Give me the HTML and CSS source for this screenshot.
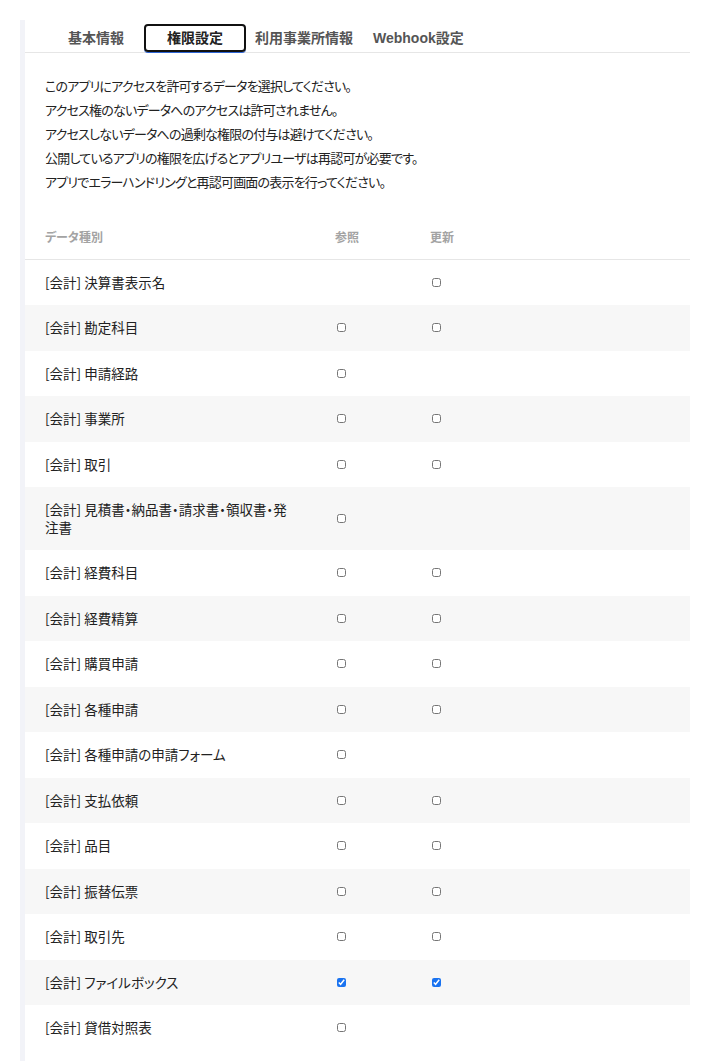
FILE: index.html
```html
<!DOCTYPE html>
<html lang="ja">
<head>
<meta charset="utf-8">
<title>権限設定</title>
<link rel="stylesheet" href="styles.css">
</head>
<body>
<div class="panel">
  <nav class="tabs">
    <span class="tab">基本情報</span>
    <span class="tab active">権限設定</span>
    <span class="tab">利用事業所情報</span>
    <span class="tab">Webhook設定</span>
  </nav>
  <div class="desc">
    <p>このアプリにアクセスを許可するデータを選択してください。</p>
    <p>アクセス権のないデータへのアクセスは許可されません。</p>
    <p>アクセスしないデータへの過剰な権限の付与は避けてください。</p>
    <p>公開しているアプリの権限を広げるとアプリユーザは再認可が必要です。</p>
    <p>アプリでエラーハンドリングと再認可画面の表示を行ってください。</p>
  </div>
  <table class="perm">
    <thead>
      <tr><th class="c-name">データ種別</th><th class="c-read">参照</th><th class="c-write">更新</th></tr>
    </thead>
    <tbody>
      <tr><td class="c-name">[会計] 決算書表示名</td><td class="c-read"></td><td class="c-write"><input type="checkbox"></td></tr>
      <tr><td class="c-name">[会計] 勘定科目</td><td class="c-read"><input type="checkbox"></td><td class="c-write"><input type="checkbox"></td></tr>
      <tr><td class="c-name">[会計] 申請経路</td><td class="c-read"><input type="checkbox"></td><td class="c-write"></td></tr>
      <tr><td class="c-name">[会計] 事業所</td><td class="c-read"><input type="checkbox"></td><td class="c-write"><input type="checkbox"></td></tr>
      <tr><td class="c-name">[会計] 取引</td><td class="c-read"><input type="checkbox"></td><td class="c-write"><input type="checkbox"></td></tr>
      <tr><td class="c-name">[会計] 見積書・納品書・請求書・領収書・発注書</td><td class="c-read"><input type="checkbox"></td><td class="c-write"></td></tr>
      <tr><td class="c-name">[会計] 経費科目</td><td class="c-read"><input type="checkbox"></td><td class="c-write"><input type="checkbox"></td></tr>
      <tr><td class="c-name">[会計] 経費精算</td><td class="c-read"><input type="checkbox"></td><td class="c-write"><input type="checkbox"></td></tr>
      <tr><td class="c-name">[会計] 購買申請</td><td class="c-read"><input type="checkbox"></td><td class="c-write"><input type="checkbox"></td></tr>
      <tr><td class="c-name">[会計] 各種申請</td><td class="c-read"><input type="checkbox"></td><td class="c-write"><input type="checkbox"></td></tr>
      <tr><td class="c-name">[会計] 各種申請の申請フォーム</td><td class="c-read"><input type="checkbox"></td><td class="c-write"></td></tr>
      <tr><td class="c-name">[会計] 支払依頼</td><td class="c-read"><input type="checkbox"></td><td class="c-write"><input type="checkbox"></td></tr>
      <tr><td class="c-name">[会計] 品目</td><td class="c-read"><input type="checkbox"></td><td class="c-write"><input type="checkbox"></td></tr>
      <tr><td class="c-name">[会計] 振替伝票</td><td class="c-read"><input type="checkbox"></td><td class="c-write"><input type="checkbox"></td></tr>
      <tr><td class="c-name">[会計] 取引先</td><td class="c-read"><input type="checkbox"></td><td class="c-write"><input type="checkbox"></td></tr>
      <tr><td class="c-name">[会計] ファイルボックス</td><td class="c-read"><input type="checkbox" checked></td><td class="c-write"><input type="checkbox" checked></td></tr>
      <tr><td class="c-name">[会計] 貸借対照表</td><td class="c-read"><input type="checkbox"></td><td class="c-write"></td></tr>
    </tbody>
  </table>
</div>
</body>
</html>
```

FILE: styles.css
```css
html, body {
  margin: 0;
  padding: 0;
  background: #ffffff;
}
body {
  font-family: "Noto Sans CJK JP", "Noto Sans", sans-serif;
  color: #222222;
  font-feature-settings: "palt";
}
.panel {
  margin: 20px 20px 0 20px;
  border-left: 5px solid #f2f3f8;
  min-height: 1041px;
  box-sizing: border-box;
}
.tabs {
  display: flex;
  align-items: flex-start;
  padding: 4px 0 0 33px;
  height: 28px;
  border-bottom: 1px solid #e6e6e6;
}
.tab {
  box-sizing: border-box;
  height: 28px;
  line-height: 28px;
  padding: 0 10px;
  font-family: "Liberation Sans", "Noto Sans CJK JP", sans-serif;
  font-size: 14px;
  font-weight: 700;
  color: #555555;
  white-space: nowrap;
  font-feature-settings: normal;
}
.tab.active {
  margin: 0 -1px 0 10px;
  padding: 0 21px;
  line-height: 24px;
  border: 2px solid #111111;
  border-radius: 4px;
  color: #222222;
  box-shadow: 0 1px 0 #2f66d6;
}
.desc {
  padding: 21px 20px 0 20px;
}
.desc p {
  margin: 0;
  font-size: 13px;
  line-height: 24px;
  letter-spacing: -0.8px;
}
.perm {
  margin-top: 21px;
  width: 665px;
  border-collapse: collapse;
  table-layout: fixed;
}
.perm th {
  height: 44px;
  box-sizing: border-box;
  padding: 0;
  text-align: left;
  font-size: 12px;
  font-weight: 700;
  color: #a3a3a3;
  border-bottom: 1px solid #e6e6e6;
  vertical-align: middle;
}
.perm td {
  padding: 14px 0;
  font-size: 13.5px;
  line-height: 17.5px;
  vertical-align: middle;
}
.perm tbody tr:nth-child(even) td {
  background: #f7f7f7;
}
.perm .c-name {
  width: 310px;
  padding-left: 20px;
  padding-right: 38px;
  box-sizing: border-box;
}
.perm .c-read {
  width: 95px;
}
.perm input[type="checkbox"] {
  width: 9px;
  height: 9px;
  margin: 0 0 0 2px;
  vertical-align: middle;
  accent-color: #1a73f0;
  display: block;
}
```
